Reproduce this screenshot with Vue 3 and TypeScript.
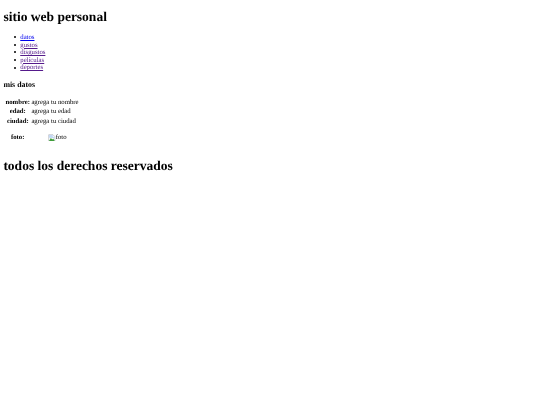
<script setup lang="ts">
const links: { label: string; visited: boolean }[] = [
  { label: 'datos', visited: false },
  { label: 'gustos', visited: true },
  { label: 'disgustos', visited: true },
  { label: 'películas', visited: true },
  { label: 'deportes', visited: true },
]
const rows: [string, string][] = [
  ['nombre:', 'agrega tu nombre'],
  ['edad:', 'agrega tu edad'],
  ['ciudad:', 'agrega tu ciudad'],
]
</script>

<template>
  <div class="page">
    <h1>sitio web personal</h1>
    <ul>
      <li v-for="l in links" :key="l.label">
        <a href="#" :class="{ seen: l.visited }" @click.prevent>{{ l.label }}</a>
      </li>
    </ul>
    <h3>mis datos</h3>
    <dl class="data">
      <template v-for="r in rows" :key="r[0]">
        <dt>{{ r[0] }}</dt>
        <dd>{{ r[1] }}</dd>
      </template>
    </dl>
    <dl class="photo">
      <dt>foto:</dt>
      <dd class="broken">
        <svg width="18" height="18" viewBox="0 0 16 16">
          <path d="M1.5 1.5h9l4 4v9h-13z" fill="#fff" stroke="#8f959b" />
          <path d="M2 14.5l4-6 3 3 2-2 3 5z" fill="#3f9e3a" />
          <path d="M2 2h8v4h4v3L2 8z" fill="#c4d8f5" />
        </svg>foto
      </dd>
    </dl>
    <h1 class="foot">todos los derechos reservados</h1>
  </div>
</template>

<style scoped>
.page {
  zoom: 0.421875;
  padding: 0 8px;
  font-family: "Liberation Serif", serif;
  font-size: 16px;
  color: #000;
  text-rendering: geometricPrecision;
  filter: blur(0.7px);
}
h1 {
  font-size: 32px;
  margin: 21.44px 0;
}
ul {
  margin: 18.7px 0 13.3px;
  padding-left: 40px;
  list-style: none;
}
li {
  position: relative;
  line-height: 18px;
}
li::before {
  content: "";
  position: absolute;
  left: -15px;
  top: 5px;
  width: 5px;
  height: 5px;
  border-radius: 50%;
  background: #000;
}
a {
  color: #0000ee;
  text-decoration: underline;
}
a.seen {
  color: #551a8b;
}
h3 {
  font-size: 18.72px;
  margin: 18.72px 0 20.72px;
}
dl {
  margin: 0;
  display: grid;
  grid-auto-rows: 22.4px;
  align-items: center;
  width: max-content;
}
dt {
  font-weight: bold;
  text-align: center;
}
dd {
  margin: 0;
}
.data {
  grid-template-columns: auto auto;
  column-gap: 3px;
  margin-left: 5px;
}
.photo {
  grid-template-columns: auto auto;
  column-gap: 56px;
  margin: 16px 0 0 18px;
}
.broken {
  display: flex;
  align-items: center;
}
.foot {
  margin-top: 37px;
}
</style>
